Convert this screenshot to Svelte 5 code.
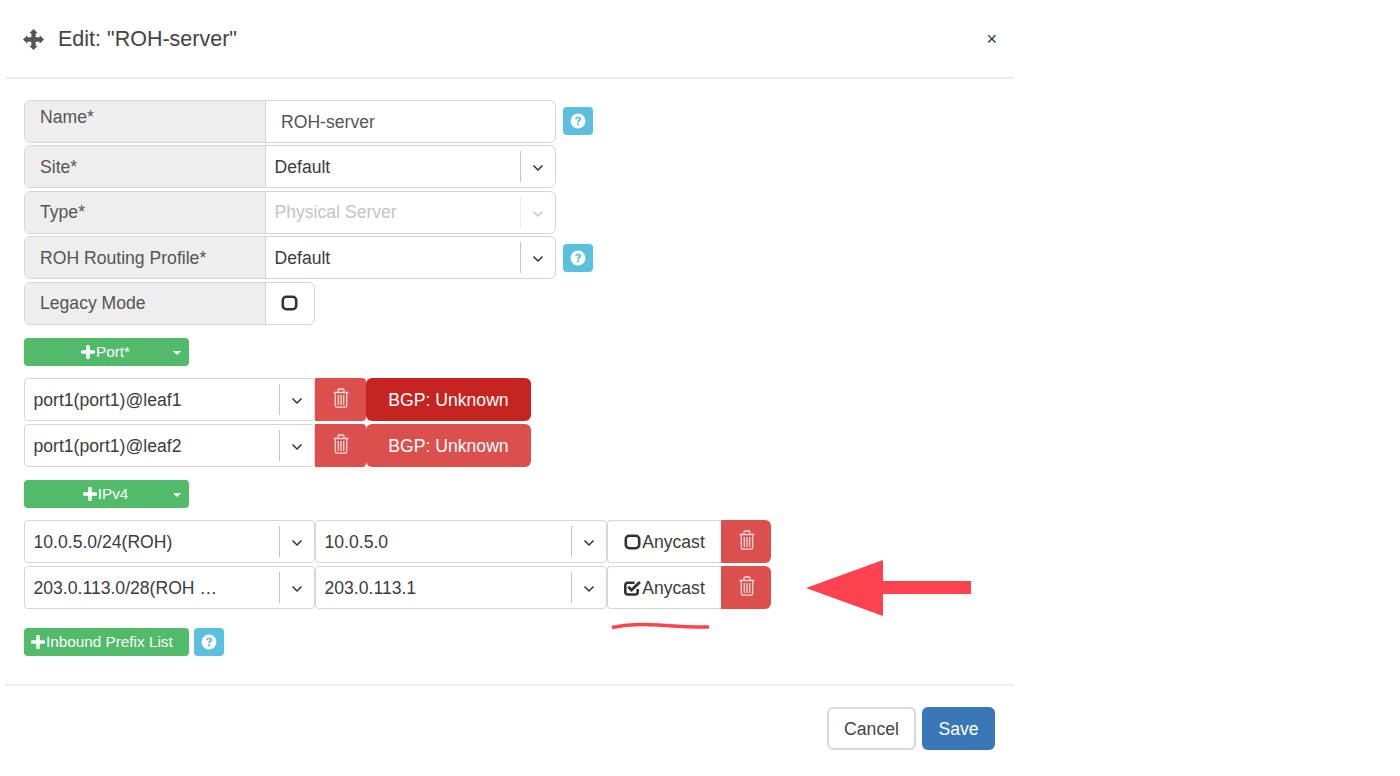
<script>
	const portRows = [
		{ name: 'port1(port1)@leaf1', bgpClass: 'bgp dark' },
		{ name: 'port1(port1)@leaf2', bgpClass: 'bgp' }
	];
	const ipRows = [
		{ subnet: '10.0.5.0/24(ROH)', ip: '10.0.5.0', checked: false },
		{ subnet: '203.0.113.0/28(ROH …', ip: '203.0.113.1', checked: true }
	];
</script>

{#snippet chevron()}
	<svg class="chevron" viewBox="0 0 12 8" width="12" height="8"><path d="M1.500 1.500 6 6l4.500-4.500" fill="none" stroke="currentColor" stroke-width="1.500" /></svg>
{/snippet}

{#snippet help()}
	<button class="help" aria-label="help">
		<svg viewBox="0 0 14 14" width="16" height="16">
			<circle cx="7" cy="7" r="6.500" fill="#fff" />
			<path d="M4.500 5.400C4.600 4 5.700 3.100 7.100 3.100c1.500 0 2.600.9 2.600 2.100 0 1.800-1.800 1.700-1.800 3H6.200c0-2 1.700-2 1.700-2.900 0-.4-.4-.7-.9-.7-.6 0-1 .4-1 .9z" fill="#5bc0de" />
			<rect x="6.200" y="9" width="1.700" height="1.700" fill="#5bc0de" />
		</svg>
	</button>
{/snippet}

{#snippet trash()}
	<svg viewBox="0 0 16 20" width="16" height="20" fill="none" stroke="#f8dcdc" stroke-width="1.300">
		<path d="M.6 4.500h14.800M5 4V2.200q0-1.200 1.200-1.200h3.600q1.200 0 1.200 1.200V4" />
		<path d="M2.300 4.500v12.900q0 1.800 1.800 1.800h7.800q1.800 0 1.800-1.800V4.500" />
		<path d="M5.300 7v10M8 7v10M10.700 7v10" />
	</svg>
{/snippet}

{#snippet plus()}
	<svg class="plus" viewBox="0 0 14 14" width="14" height="14"><path d="M7 1.500v11M1.500 7h11" stroke="#fff" stroke-width="3.600" stroke-linecap="round" /></svg>
{/snippet}

{#snippet box(checked)}
	<svg class="box" viewBox="0 0 18 16" width="18" height="16" fill="none" stroke="#333" stroke-width="2.600">
		{#if checked}
			<path d="M13.700 9v3q0 2.500-2.500 2.500H3.800q-2.500 0-2.500-2.500V5.300q0-2.500 2.500-2.500h6.700" />
			<path d="M4.300 6.800l3.200 3.300L16 1.900" stroke-width="2.800" />
		{:else}
			<rect x="1.800" y="1.800" width="13.400" height="12.400" rx="3.400" />
		{/if}
	</svg>
{/snippet}

<div class="modal">
	<header>
		<svg class="move" viewBox="0 0 22 22" width="21" height="21">
			<path fill="#555" d="M11 0 15.500 4.500H13.300V8.700H17.500V6.500L22 11 17.500 15.500V13.300H13.300V17.500H15.500L11 22 6.500 17.500H8.700V13.300H4.500V15.500L0 11 4.500 6.500V8.700H8.700V4.500H6.500Z" />
		</svg>
		<h4>Edit: "ROH-server"</h4>
		<span class="close">×</span>
	</header>

	<div class="body">
		<div class="field">
			<div class="group">
				<span class="label top">Name*</span>
				<span class="input">ROH-server</span>
			</div>
			{@render help()}
		</div>
		<div class="field">
			<div class="group">
				<span class="label">Site*</span>
				<span class="select"><span class="value">Default</span><span class="sep"></span><span class="arrow">{@render chevron()}</span></span>
			</div>
		</div>
		<div class="field">
			<div class="group">
				<span class="label">Type*</span>
				<span class="select disabled"><span class="value">Physical Server</span><span class="sep"></span><span class="arrow">{@render chevron()}</span></span>
			</div>
		</div>
		<div class="field">
			<div class="group">
				<span class="label">ROH Routing Profile*</span>
				<span class="select"><span class="value">Default</span><span class="sep"></span><span class="arrow">{@render chevron()}</span></span>
			</div>
			{@render help()}
		</div>
		<div class="field">
			<div class="group short">
				<span class="label">Legacy Mode</span>
				<span class="check">{@render box(false)}</span>
			</div>
		</div>

		<button class="green split">
			<span class="caption">{@render plus()}Port*</span>
			<span class="caret"></span>
		</button>

		<div class="rows">
			{#each portRows as row}
				<div class="row">
					<span class="select plain w291"><span class="value">{row.name}</span><span class="sep"></span><span class="arrow">{@render chevron()}</span></span>
					<button class="del" aria-label="delete">{@render trash()}</button>
					<button class={row.bgpClass}>BGP: Unknown</button>
				</div>
			{/each}
		</div>

		<button class="green split">
			<span class="caption">{@render plus()}IPv4</span>
			<span class="caret"></span>
		</button>

		<div class="rows">
			{#each ipRows as row}
				<div class="row">
					<span class="select plain w291"><span class="value">{row.subnet}</span><span class="sep"></span><span class="arrow">{@render chevron()}</span></span>
					<span class="select plain w292"><span class="value">{row.ip}</span><span class="sep"></span><span class="arrow">{@render chevron()}</span></span>
					<span class="anycast">{@render box(row.checked)}Anycast</span>
					<button class="del end" aria-label="delete">{@render trash()}</button>
				</div>
			{/each}
		</div>

		<div class="inbound">
			<button class="green wide">{@render plus()}Inbound Prefix List</button>
			{@render help()}
		</div>
	</div>

	<footer>
		<button class="cancel">Cancel</button>
		<button class="save">Save</button>
	</footer>
</div>

<!-- red annotation drawn on top of the screenshot -->
<svg class="annotation" width="1400" height="776" viewBox="0 0 1400 776">
	<path d="M806 588 883 560v21h88v13h-88v22z" fill="#fd4350" />
	<path d="M612 627.500c14-3 30-3.500 46-2.500s34 2.500 51 2" fill="none" stroke="#fd4350" stroke-width="3.500" />
</svg>

<style>
	:global(body) {
		background: #fff;
		font-family: 'Liberation Sans', Arial, sans-serif;
		color: #333;
		overflow: hidden;
	}

	button {
		font-family: inherit;
		cursor: pointer;
	}

	.modal {
		width: 1009px;
		height: 776px;
		margin-left: 5px;
		display: flex;
		flex-direction: column;
	}

	header {
		display: flex;
		align-items: center;
		height: 79px;
		padding: 2px 17px 0 18px;
		box-sizing: border-box;
		border-bottom: 2px solid #eeeeee;
	}

	.move {
		margin-right: 14px;
	}

	h4 {
		margin: 0;
		flex: 1;
		font-size: 21.500px;
		font-weight: 400;
		color: #444;
	}

	.close {
		font-size: 18px;
		color: #333;
	}

	.body {
		height: 607px;
		box-sizing: border-box;
		padding: 20.500px 0 0 19px;
		border-bottom: 2px solid #eeeeee;
	}

	.field {
		display: flex;
		align-items: center;
		height: 43px;
		margin-bottom: 2.500px;
	}

	.group {
		display: flex;
		width: 532px;
		height: 43px;
		box-sizing: border-box;
		border: 1.500px solid #d6d6d6;
		border-radius: 6px;
		overflow: hidden;
	}

	.group.short {
		width: 291px;
	}

	.label {
		width: 241px;
		flex: none;
		box-sizing: border-box;
		padding: 1px 0 0 15px;
		display: flex;
		align-items: center;
		background: #eeeeee;
		border-right: 1.500px solid #d4d4d4;
		font-size: 17.600px;
		color: #555;
	}

	.label.top {
		align-items: flex-start;
		padding-top: 6px;
	}

	.input {
		flex: 1;
		padding: 2px 0 0 15px;
		display: flex;
		align-items: center;
		font-size: 17.600px;
		color: #555;
	}

	.select {
		flex: 1;
		display: flex;
		align-items: center;
		box-sizing: border-box;
		font-size: 17.600px;
		color: #3c3c3c;
	}

	.select.plain {
		flex: none;
		height: 43px;
		border: 1.500px solid #d6d6d6;
		border-radius: 4px;
	}

	.w291 {
		width: 291px;
	}

	.w292 {
		width: 292px;
	}

	.value {
		flex: 1;
		padding: 1px 0 0 8.500px;
		white-space: nowrap;
	}

	.sep {
		width: 1px;
		height: 31px;
		background: #c4c4c4;
	}

	.arrow {
		width: 34.500px;
		display: flex;
		justify-content: center;
		color: #333;
	}

	.chevron {
		margin-top: 3px;
	}

	.disabled {
		color: #c4c4c4;
	}

	.disabled .sep {
		background: #ececec;
	}

	.disabled .arrow {
		color: #c8c8c8;
	}

	.check {
		flex: 1;
		display: flex;
		align-items: center;
		justify-content: center;
	}

	.help {
		width: 30px;
		height: 28px;
		margin-left: 7px;
		padding: 0;
		border: none;
		border-radius: 4px;
		background: #5bc0de;
		display: flex;
		align-items: center;
		justify-content: center;
	}

	.green {
		height: 28px;
		width: 165px;
		padding: 0;
		border: none;
		border-radius: 4px;
		background: #52bb69;
		color: #fff;
		font-size: 15.300px;
		display: flex;
		align-items: center;
	}

	.split {
		margin-top: 13.500px;
		position: relative;
		justify-content: center;
	}

	.caption {
		display: flex;
		align-items: center;
		margin-right: 2px;
	}

	.plus {
		margin-right: 1px;
	}

	.caret {
		position: absolute;
		right: 8px;
		top: 13px;
		border-left: 4.500px solid transparent;
		border-right: 4.500px solid transparent;
		border-top: 4.500px solid #fff;
	}

	.rows {
		margin-top: 12px;
		display: flex;
		flex-direction: column;
		gap: 3px;
		margin-bottom: 13px;
	}

	.split + .rows + .split {
		margin-top: 0;
	}

	.row {
		display: flex;
		height: 43px;
	}

	.del {
		width: 51px;
		height: 43px;
		margin-left: 0;
		border: none;
		border-radius: 0 4px 4px 0;
		background: #db4f4d;
		display: flex;
		align-items: flex-start;
		justify-content: center;
		padding: 9.500px 0 0 1px;
		box-sizing: border-box;
	}

	.del.end {
		width: 50px;
		border-radius: 0 6px 6px 0;
	}

	.bgp {
		width: 165px;
		height: 43px;
		padding: 1px 0 0;
		border: none;
		border-radius: 6px;
		background: #db4f4d;
		color: #fff;
		font-size: 17.600px;
	}

	.bgp.dark {
		background: #c62420;
	}

	.anycast {
		width: 114px;
		height: 43px;
		box-sizing: border-box;
		border: 1.500px solid #d6d6d6;
		border-right: none;
		border-radius: 4px 0 0 4px;
		display: flex;
		align-items: center;
		justify-content: center;
		font-size: 17.600px;
		color: #3c3c3c;
		padding-top: 1px;
	}

	.inbound {
		display: flex;
		align-items: center;
		margin-top: 19px;
		gap: 5px;
	}

	.inbound .help {
		margin-left: 0;
	}

	.wide {
		padding-left: 7px;
		box-sizing: border-box;
	}

	footer {
		display: flex;
		justify-content: flex-end;
		gap: 6px;
		padding: 21px 19px 0 0;
	}

	.cancel,
	.save {
		height: 43px;
		border-radius: 6px;
		font-size: 17.600px;
		padding: 1px 0 0;
	}

	.cancel {
		width: 89px;
		background: #fff;
		border: 2px solid #d9d9d9;
		color: #444;
	}

	.save {
		width: 73px;
		background: #3a77b6;
		border: none;
		color: #fff;
	}

	.annotation {
		position: absolute;
		left: 0;
		top: 0;
		pointer-events: none;
	}
</style>
